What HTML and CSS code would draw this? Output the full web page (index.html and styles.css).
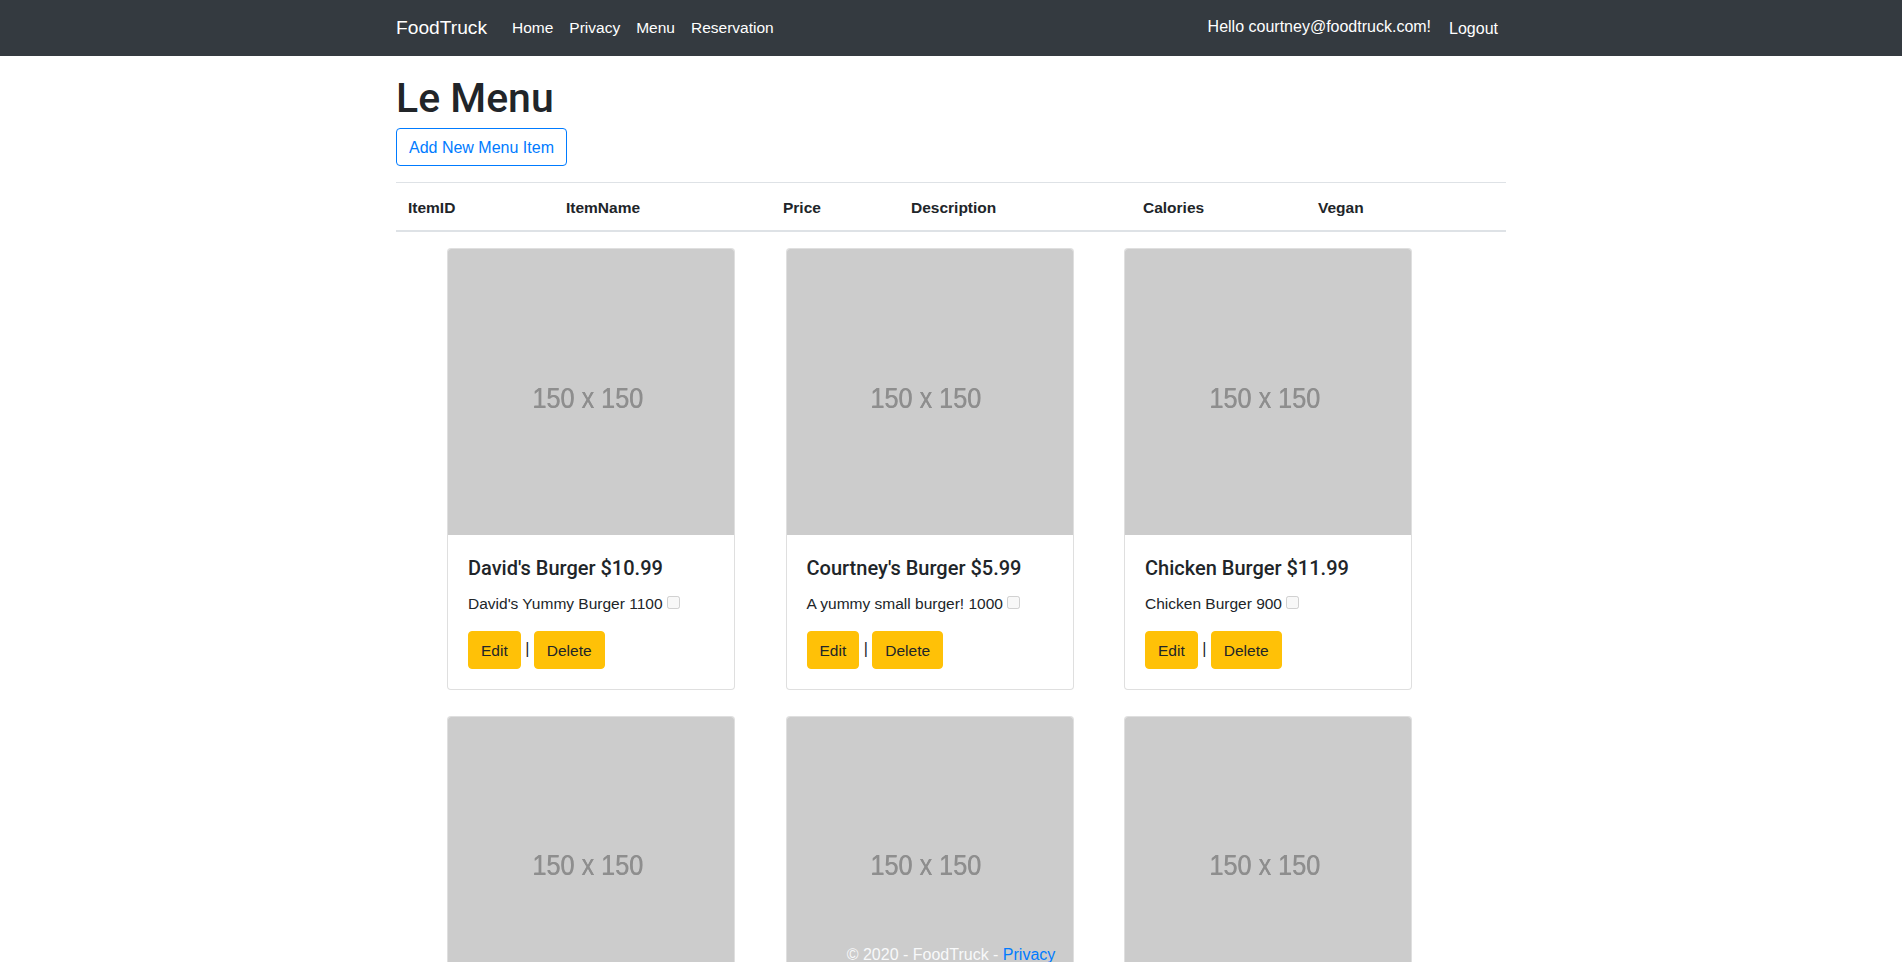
FILE: index.html
```html
<!DOCTYPE html>
<html lang="en">
<head>
<meta charset="utf-8">
<title>Menu - FoodTruck</title>
<link rel="stylesheet" href="styles.css">
</head>
<body>
<header>
  <nav class="navbar">
    <div class="container nav-inner">
      <a class="brand" href="#">FoodTruck</a>
      <ul class="nav-list nav-main">
        <li><a class="nav-link" href="#">Home</a></li>
        <li><a class="nav-link" href="#">Privacy</a></li>
        <li><a class="nav-link" href="#">Menu</a></li>
        <li><a class="nav-link" href="#">Reservation</a></li>
      </ul>
      <ul class="nav-list nav-user">
        <li><a class="nav-link" href="#">Hello courtney@foodtruck.com!</a></li>
        <li><button class="nav-link logout" type="button">Logout</button></li>
      </ul>
    </div>
  </nav>
</header>

<div class="container">
  <main>
    <h1 class="page-title">Le Menu</h1>
    <p class="actions"><a class="btn btn-outline" href="#">Add New Menu Item</a></p>

    <table class="menu-table">
      <colgroup>
        <col class="c-id"><col class="c-name"><col class="c-price"><col class="c-desc"><col class="c-cal"><col class="c-vegan">
      </colgroup>
      <thead>
        <tr>
          <th>ItemID</th>
          <th>ItemName</th>
          <th>Price</th>
          <th>Description</th>
          <th>Calories</th>
          <th>Vegan</th>
        </tr>
      </thead>
    </table>

    <div class="cards">
      <div class="card">
        <div class="card-img"><span>150 x 150</span></div>
        <div class="card-body">
          <h5 class="card-title">David's Burger $10.99</h5>
          <p class="card-text">David's Yummy Burger 1100 <input type="checkbox" disabled></p>
          <a class="btn btn-warning" href="#">Edit</a> | <a class="btn btn-warning" href="#">Delete</a>
        </div>
      </div>
      <div class="card">
        <div class="card-img"><span>150 x 150</span></div>
        <div class="card-body">
          <h5 class="card-title">Courtney's Burger $5.99</h5>
          <p class="card-text">A yummy small burger! 1000 <input type="checkbox" disabled></p>
          <a class="btn btn-warning" href="#">Edit</a> | <a class="btn btn-warning" href="#">Delete</a>
        </div>
      </div>
      <div class="card">
        <div class="card-img"><span>150 x 150</span></div>
        <div class="card-body">
          <h5 class="card-title">Chicken Burger $11.99</h5>
          <p class="card-text">Chicken Burger 900 <input type="checkbox" disabled></p>
          <a class="btn btn-warning" href="#">Edit</a> | <a class="btn btn-warning" href="#">Delete</a>
        </div>
      </div>
      <div class="card">
        <div class="card-img"><span>150 x 150</span></div>
      </div>
      <div class="card">
        <div class="card-img"><span>150 x 150</span></div>
      </div>
      <div class="card">
        <div class="card-img"><span>150 x 150</span></div>
      </div>
    </div>
  </main>
</div>

<footer class="footer">
  &copy; 2020 - FoodTruck - <a href="#">Privacy</a>
</footer>
</body>
</html>
```

FILE: styles.css
```css
html {
  height: 100%;
  overflow: hidden;
  position: relative;
}

body {
  margin: 0;
  font-family: "Liberation Sans", Arial, sans-serif;
  font-size: 16px;
  line-height: 1.5;
  color: #212529;
  background: #fff;
}

a {
  text-decoration: none;
}

.container {
  width: 1140px;
  margin: 0 auto;
  padding: 0 15px;
  box-sizing: border-box;
}

/* navbar */
.navbar {
  background: #343a40;
  padding: 8px 16px;
  margin-bottom: 16px;
}

.nav-inner {
  display: flex;
  align-items: center;
}

.brand {
  color: #fff;
  font-size: 19.2px;
  line-height: 30px;
  padding: 5px 0;
  margin-right: 17px;
}

.nav-list {
  list-style: none;
  margin: 0;
  padding: 0;
  display: flex;
  align-items: center;
}

.nav-main {
  flex: 1;
}

.nav-link {
  display: block;
  color: #fff;
  padding: 8px;
  font-size: 15.5px;
  line-height: 24px;
}

.nav-user .nav-link {
  font-size: 16px;
  padding: 7px 8px 9px;
}

.nav-user .logout {
  background: none;
  border: 0;
  font-family: inherit;
  padding: 9px 8px 7px 10px;
  cursor: pointer;
}

/* heading */
.page-title {
  margin: 0 0 6px;
  padding-top: 2px;
  font-family: Roboto, "Liberation Sans", sans-serif;
  font-size: 41px;
  font-weight: 500;
  line-height: 48px;
}

.actions {
  margin: 0 0 16px;
}

.btn {
  display: inline-block;
  padding: 7px 12px 5px;
  font-size: 16px;
  line-height: 24px;
  border: 1px solid transparent;
  border-radius: 4px;
  vertical-align: middle;
}

.btn-outline {
  color: #007bff;
  border-color: #007bff;
}

.btn-warning {
  background: #ffc107;
  border-color: #ffc107;
  color: #212529;
  font-size: 15.5px;
}

/* table */
.menu-table {
  width: 100%;
  border-collapse: collapse;
  table-layout: fixed;
  margin-bottom: 16px;
}

.c-id { width: 158px; }
.c-name { width: 217px; }
.c-price { width: 128px; }
.c-desc { width: 232px; }
.c-cal { width: 175px; }
.c-vegan { width: 200px; }

.menu-table th {
  text-align: left;
  font-weight: 700;
  font-size: 15.5px;
  padding: 13px 12px 11px;
  border-top: 1px solid #dee2e6;
  border-bottom: 2px solid #dee2e6;
  vertical-align: bottom;
}

/* cards */
.cards {
  display: grid;
  grid-template-columns: repeat(3, 288px);
  column-gap: 50.5px;
  row-gap: 26px;
  padding-left: 51px;
}

.card {
  border: 1px solid rgba(0, 0, 0, 0.125);
  border-radius: 4px;
  overflow: hidden;
  background: #fff;
}

.card-img {
  height: 286px;
  background: #cccccc;
  display: flex;
  align-items: center;
  justify-content: center;
  padding: 13px 7px 0 0;
  box-sizing: border-box;
}

.card-img span {
  font-family: "Liberation Sans", Arial, sans-serif;
  font-size: 29px;
  color: #8e8e8e;
  transform: scaleX(0.87);
  text-shadow: 0.4px 0 0 #8e8e8e;
  filter: blur(0.4px);
}

.card-body {
  padding: 20px;
}

.card-title {
  margin: 0 0 11px;
  padding-top: 1px;
  font-family: Roboto, "Liberation Sans", sans-serif;
  font-size: 20px;
  font-weight: 500;
  line-height: 24px;
}

.card-text {
  margin: 0 0 15px;
  padding-top: 1px;
  font-size: 15.5px;
}

.card-text input {
  width: 13px;
  height: 13px;
  margin: 0;
  vertical-align: 0;
}

/* footer */
.footer {
  position: absolute;
  top: 943px;
  left: 0;
  right: 0;
  text-align: center;
  color: #f8f9fa;
  line-height: 24px;
  white-space: nowrap;
}

.footer a {
  color: #007bff;
}
```
